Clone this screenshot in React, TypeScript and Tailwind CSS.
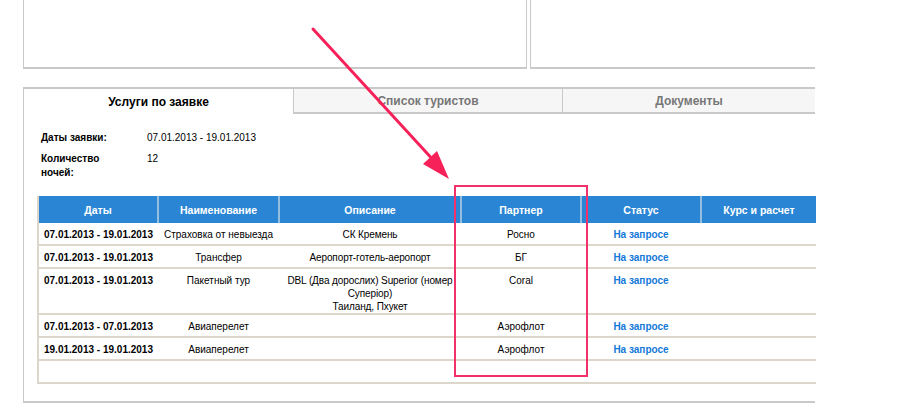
import React from 'react';

type Row = {
  dates: string;
  name: string;
  desc: string[];
  partner: string;
  status: string;
};

const rows: Row[] = [
  { dates: '07.01.2013 - 19.01.2013', name: 'Страховка от невыезда', desc: ['СК Кремень'], partner: 'Росно', status: 'На запросе' },
  { dates: '07.01.2013 - 19.01.2013', name: 'Трансфер', desc: ['Аеропорт-готель-аеропорт'], partner: 'БГ', status: 'На запросе' },
  {
    dates: '07.01.2013 - 19.01.2013',
    name: 'Пакетный тур',
    desc: ['DBL (Два дорослих) Superior (номер', 'Суперіор)', 'Таиланд, Пхукет'],
    partner: 'Coral',
    status: 'На запросе',
  },
  { dates: '07.01.2013 - 07.01.2013', name: 'Авиаперелет', desc: [], partner: 'Аэрофлот', status: 'На запросе' },
  { dates: '19.01.2013 - 19.01.2013', name: 'Авиаперелет', desc: [], partner: 'Аэрофлот', status: 'На запросе' },
];

const columns = [
  { label: 'Даты', w: 'w-[120px]' },
  { label: 'Наименование', w: 'w-[121px]' },
  { label: 'Описание', w: 'w-[182px]' },
  { label: 'Партнер', w: 'w-[120px]' },
  { label: 'Статус', w: 'w-[120px]' },
  { label: 'Курс и расчет', w: 'w-[115px]' },
];

const tabs = ['Услуги по заявке', 'Список туристов', 'Документы'];

function Annotation() {
  return (
    <>
      <svg className="pointer-events-none absolute left-0 top-0" width="905" height="416">
        <line x1="313" y1="29" x2="436" y2="163" stroke="#f7215a" strokeWidth="3" strokeLinecap="round" />
        <polygon points="449,179 423,164 437,151" fill="#f7215a" />
      </svg>
      <div className="pointer-events-none absolute left-[454px] top-[185px] h-[192px] w-[134px] border-2 border-[#f2316b]" />
    </>
  );
}

export default function App() {
  return (
    <div className="relative h-[416px] w-[905px] overflow-hidden bg-white font-['Liberation_Sans',Arial,sans-serif] text-[10px] leading-[14px] text-black">
      <div className="ml-[23px] w-[792px]">
        {/* top panels */}
        <div className="flex h-[69px] gap-[3px]">
          <div className="w-[504px] border-x border-b-2 border-[#c9c9c9]" />
          <div className="flex-1 border-l border-b-2 border-[#c9c9c9]" />
        </div>

        {/* tabs */}
        <div className="mt-[18px] flex h-[27px]">
          {tabs.map((tab, i) => (
            <div
              key={tab}
              className={
                i === 0
                  ? 'flex w-[270px] items-center justify-center border-l border-t-2 border-[#c9c9c9] bg-white text-[12px] font-bold text-black'
                  : i === 1
                    ? 'flex w-[270px] items-center justify-center border-x border-y-2 border-[#c9c9c9] bg-[#f6f6f6] text-[12px] font-bold text-[#777]'
                    : 'flex flex-1 items-center justify-center border-y-2 border-[#c9c9c9] bg-[#f6f6f6] text-[12px] font-bold text-[#777]'
              }
            >
              {tab}
            </div>
          ))}
        </div>

        {/* tab body */}
        <div className="h-[289px] border-b-2 border-l border-[#c9c9c9] pl-[13px] pt-[17px]">
          <div className="flex flex-col gap-[7px] pl-[4px]">
            <div className="flex">
              <span className="w-[106px] font-bold">Даты заявки:</span>
              <span>07.01.2013 - 19.01.2013</span>
            </div>
            <div className="flex">
              <span className="w-[106px] font-bold">
                Количество
                <br />
                ночей:
              </span>
              <span>12</span>
            </div>
          </div>

          <table className="mt-[16px] w-[778px] table-fixed border-collapse border-l-2 border-[#dcd7ca]">
            <thead>
              <tr className="h-[27px] bg-[#2a86d4] text-[10.5px] text-white">
                {columns.map((c, i) => (
                  <th key={c.label} className={`${c.w} ${i > 0 ? 'border-l-2 border-[#94bde0]' : ''} text-center font-bold`}>
                    {c.label}
                  </th>
                ))}
              </tr>
            </thead>
            <tbody>
              {rows.map((r, idx) => (
                <tr key={idx} className="border-b-2 border-[#dcd7ca] align-top">
                  <td className="whitespace-nowrap pb-[2px] pt-[5px] text-center font-bold">{r.dates}</td>
                  <td className="whitespace-nowrap pt-[5px] text-center">{r.name}</td>
                  <td className="pt-[5px] text-center leading-[13px] tracking-[-0.1px]">
                    {r.desc.map((d) => (
                      <div key={d} className="whitespace-nowrap">
                        {d}
                      </div>
                    ))}
                  </td>
                  <td className="pt-[5px] text-center">{r.partner}</td>
                  <td className="whitespace-nowrap pt-[5px] text-center font-bold text-[#1478d9]">{r.status}</td>
                  <td />
                </tr>
              ))}
              <tr className="h-[23px] border-b-2 border-[#dcd7ca]">
                <td colSpan={6} />
              </tr>
            </tbody>
          </table>
        </div>
      </div>

      <Annotation />
    </div>
  );
}
